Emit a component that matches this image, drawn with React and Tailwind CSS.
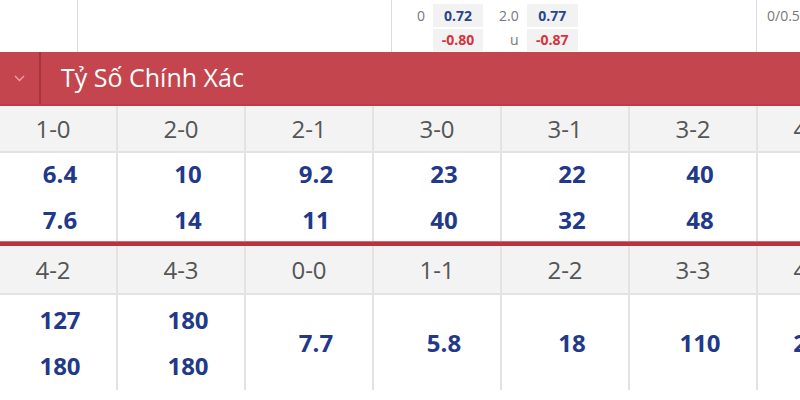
const row1 = [
  { s: "1-0", v: ["6.4", "7.6"] },
  { s: "2-0", v: ["10", "14"] },
  { s: "2-1", v: ["9.2", "11"] },
  { s: "3-0", v: ["23", "40"] },
  { s: "3-1", v: ["22", "32"] },
  { s: "3-2", v: ["40", "48"] },
  { s: "4-0", v: ["", ""], last: true },
];

const row2 = [
  { s: "4-2", v: ["127", "180"] },
  { s: "4-3", v: ["180", "180"] },
  { s: "0-0", v: ["7.7"] },
  { s: "1-1", v: ["5.8"] },
  { s: "2-2", v: ["18"] },
  { s: "3-3", v: ["110"] },
  { s: "4-4", v: ["25"], last: true },
];

function ScoreBlock({ items, labelH, valueH }) {
  return (
    <div className="ml-[-10px] flex">
      {items.map((it) => (
        <div key={it.s} className="flex w-[128px] shrink-0 flex-col border-r-2 border-[#e3e3e3]">
          <div
            className={`flex items-center justify-center border-b-2 border-[#e3e3e3] bg-[#f3f3f3] text-[24px] text-[#555] ${labelH} ${it.last ? "pr-[20px]" : ""}`}
          >
            {it.s}
          </div>
          <div
            className={`flex flex-col items-center justify-center text-[24px] font-bold leading-[46px] text-[#22398a] ${valueH} ${it.last ? "pr-[28px]" : "pl-[14px]"}`}
          >
            {it.v.map((x, i) => (
              <span key={i}>{x}</span>
            ))}
          </div>
        </div>
      ))}
    </div>
  );
}

export default function App() {
  return (
    <div
      className="h-[400px] w-[800px] overflow-hidden bg-white"
      style={{ fontFamily: '"Open Sans", "Noto Sans", sans-serif' }}
    >
      {/* odds row above */}
      <div className="flex h-[52px]">
        <div className="w-[78px] shrink-0 border-r border-[#dcdcdc]"></div>
        <div className="w-[314px] shrink-0 border-r border-[#dcdcdc]"></div>
        <div className="flex w-[365px] shrink-0 gap-[8px] border-r border-[#dcdcdc] pl-[25px] pt-[4px] text-[14px]">
          <div className="flex flex-col gap-[2px] text-[#777]">
            <span className="h-[23px] leading-[23px]">0</span>
            <span className="h-[22px]"></span>
          </div>
          <div className="flex w-[50px] flex-col gap-[2px] font-bold">
            <span className="h-[23px] bg-[#f2f2f2] text-center leading-[23px] text-[#2a4588]">0.72</span>
            <span className="h-[22px] bg-[#f2f2f2] text-center leading-[22px] text-[#d6323f]">-0.80</span>
          </div>
          <div className="ml-[8px] flex flex-col items-end gap-[2px] text-[#777]">
            <span className="h-[23px] leading-[23px]">2.0</span>
            <span className="h-[22px] leading-[22px]">u</span>
          </div>
          <div className="flex w-[51px] flex-col gap-[2px] font-bold">
            <span className="h-[23px] bg-[#f2f2f2] text-center leading-[23px] text-[#2a4588]">0.77</span>
            <span className="h-[22px] bg-[#f2f2f2] text-center leading-[22px] text-[#d6323f]">-0.87</span>
          </div>
        </div>
        <div className="flex shrink-0 gap-[5px] pl-[10px] pt-[4px] text-[14px] text-[#777]">
          <span className="h-[23px] leading-[23px]">0/0.5</span>
          <span className="h-[23px] w-[40px] bg-[#f2f2f2]"></span>
        </div>
      </div>

      {/* section header */}
      <div className="flex h-[54px] items-center border-b-2 border-[#b93e46] bg-[#c4454d]">
        <div className="flex h-full w-[41px] items-center justify-center border-r-2 border-[#a8333b]">
          <svg width="11" height="7" viewBox="0 0 11 7" fill="none">
            <path d="M1 1l4.5 4.5L10 1" stroke="#eaa3a8" strokeWidth="1.3" />
          </svg>
        </div>
        <span className="pl-[20px] text-[25px] text-white">Tỷ Số Chính Xác</span>
      </div>

      <ScoreBlock items={row1} labelH="h-[47px]" valueH="h-[88px]" />
      <div className="h-[5px] border-t border-[#d26a70] bg-[#b5343d]"></div>
      <ScoreBlock items={row2} labelH="h-[49px]" valueH="h-[95px]" />
    </div>
  );
}
